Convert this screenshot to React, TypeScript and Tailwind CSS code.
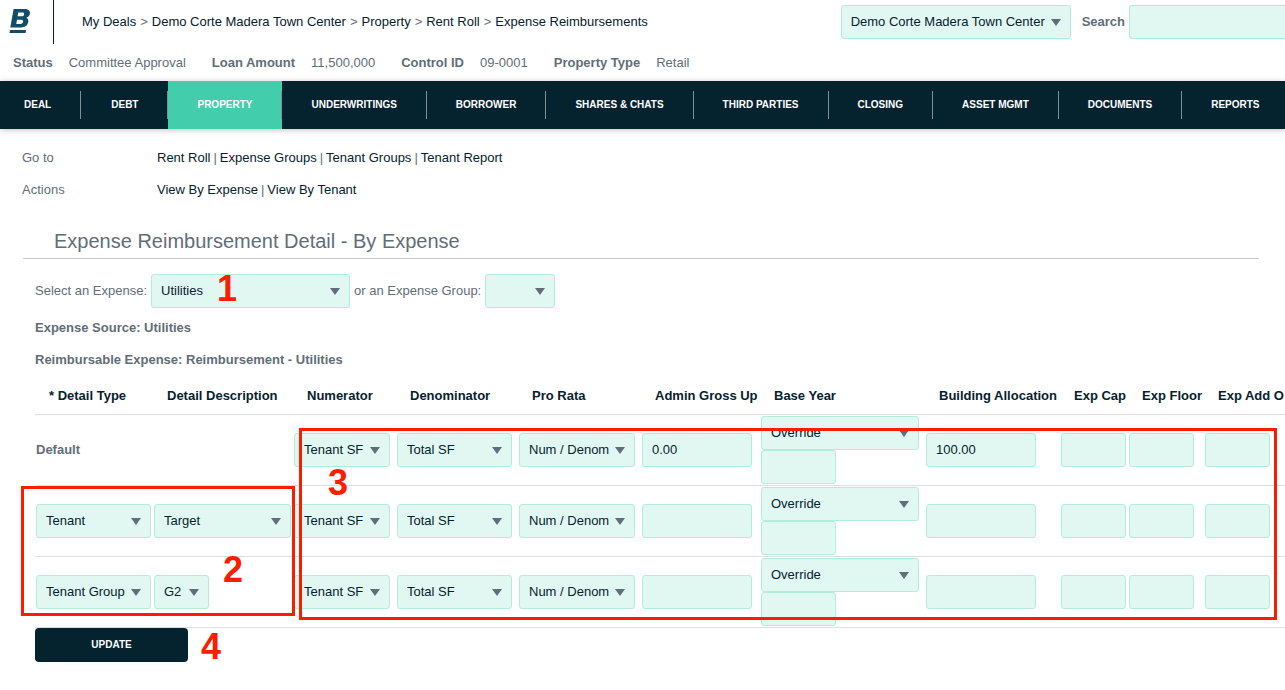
import { Fragment } from 'react';

type SelectProps = {
  label: string;
  value: string;
  className: string;
};

type InputProps = {
  label: string;
  value?: string;
  className: string;
};

type Row = {
  type: string;
  description?: string;
  descriptionWidth?: string;
  adminGrossUp?: string;
  allocation?: string;
};

const breadcrumbs = ['My Deals', 'Demo Corte Madera Town Center', 'Property', 'Rent Roll', 'Expense Reimbursements'];

const summary = [
  { label: 'Status', value: 'Committee Approval' },
  { label: 'Loan Amount', value: '11,500,000' },
  { label: 'Control ID', value: '09-0001' },
  { label: 'Property Type', value: 'Retail' },
];

const navItems = [
  { label: 'DEAL', padding: 'pl-6 pr-[29px]' },
  { label: 'DEBT', padding: 'pl-[30px] pr-[29px]' },
  { label: 'PROPERTY', padding: 'px-[29px]' },
  { label: 'UNDERWRITINGS', padding: 'px-[29px]' },
  { label: 'BORROWER', padding: 'px-[29px]' },
  { label: 'SHARES & CHATS', padding: 'px-[29px]' },
  { label: 'THIRD PARTIES', padding: 'px-[29px]' },
  { label: 'CLOSING', padding: 'px-[29px]' },
  { label: 'ASSET MGMT', padding: 'px-[29px]' },
  { label: 'DOCUMENTS', padding: 'px-[29px]' },
  { label: 'REPORTS', padding: 'px-[29px]' },
];

const links = [
  { label: 'Go to', items: ['Rent Roll', 'Expense Groups', 'Tenant Groups', 'Tenant Report'] },
  { label: 'Actions', items: ['View By Expense', 'View By Tenant'] },
];

const columns = [
  { label: '* Detail Type', width: 'w-[118px]' },
  { label: 'Detail Description', width: 'w-[140px]' },
  { label: 'Numerator', width: 'w-[103px]' },
  { label: 'Denominator', width: 'w-[122px]' },
  { label: 'Pro Rata', width: 'w-[123px]' },
  { label: 'Admin Gross Up', width: 'w-[119px]' },
  { label: 'Base Year', width: 'w-[165px]' },
  { label: 'Building Allocation', width: 'w-[135px]' },
  { label: 'Exp Cap', width: 'w-[68px]' },
  { label: 'Exp Floor', width: 'w-[76px]' },
  { label: 'Exp Add O', width: 'w-[100px]' },
];

const rows: Row[] = [
  { type: 'Default', adminGrossUp: '0.00', allocation: '100.00' },
  { type: 'Tenant', description: 'Target', descriptionWidth: 'w-[137px]' },
  { type: 'Tenant Group', description: 'G2', descriptionWidth: 'w-[55px]' },
];

function Select({ label, value, className }: SelectProps) {
  return (
    <div className={`relative ${className}`}>
      <select
        aria-label={label}
        defaultValue={value}
        className="block h-[34px] w-full appearance-none rounded-[3px] border border-[#b3ecdd] bg-[#e1f8f2] pl-[9px] text-[#05222f] outline-none"
      >
        <option value={value}>{value}</option>
      </select>
      <svg
        viewBox="0 0 10 7"
        className="pointer-events-none absolute right-[10px] top-[14px] h-[7px] w-[10px]"
        aria-hidden="true"
      >
        <path d="M0 0h10L5 7z" fill="#5f6e78" />
      </svg>
    </div>
  );
}

function Input({ label, value = '', className }: InputProps) {
  return (
    <input
      type="text"
      aria-label={label}
      defaultValue={value}
      className={`block h-[34px] rounded-[3px] border border-[#b3ecdd] bg-[#e1f8f2] px-[9px] text-[#05222f] outline-none ${className}`}
    />
  );
}

function Logo() {
  return (
    <svg viewBox="0 0 22 26" className="h-[26px] w-[22px]" fill="#124c66" role="img" aria-label="Home">
      <path
        fillRule="evenodd"
        d="M4.6 1H15.5C19 1 21.4 2.6 20.9 5.6C20.6 7.8 19.4 9.2 17.3 9.8C19.1 10.5 19.6 11.8 19.2 14.1C18.6 17.6 16.3 19.5 12 19.5H1.3zM9.2 4.6L8.6 8.3H12.4C14 8.3 14.9 7.7 15.1 6.4C15.3 5.1 14.7 4.6 13.2 4.6zM8 11.7L7.3 15.9H11.3C13 15.9 13.9 15.2 14.1 13.8C14.3 12.4 13.6 11.7 12.1 11.7z"
      />
      <path d="M1 22h16l-.4 3H.5z" />
    </svg>
  );
}

function Header() {
  return (
    <header>
      <div className="flex items-start justify-between">
        <div className="flex">
          <div className="flex h-11 w-[54px] border-r border-[#05222f] pl-[9px] pt-2">
            <Logo />
          </div>
          <nav className="flex gap-1 whitespace-nowrap pl-7 pt-[14px] leading-4" aria-label="Breadcrumb">
            {breadcrumbs.map((item, index) => (
              <Fragment key={item}>
                {index > 0 && <span>&gt;</span>}
                <a href="#" className="text-[#05222f]">
                  {item}
                </a>
              </Fragment>
            ))}
          </nav>
        </div>
        <div className="flex shrink-0 items-center pt-[5px]">
          <Select label="Deal" value="Demo Corte Madera Town Center" className="w-[230px]" />
          <label htmlFor="search" className="pl-[11px] pr-1 font-bold">
            Search
          </label>
          <input
            id="search"
            type="text"
            className="block h-[34px] w-[156px] rounded-l-[3px] border border-r-0 border-[#b3ecdd] bg-[#e1f8f2] px-[9px] outline-none"
          />
        </div>
      </div>
      <dl className="flex gap-[26px] whitespace-nowrap pb-[10px] pl-[13px] pt-[11px] leading-4">
        {summary.map((item) => (
          <div key={item.label} className="flex gap-4">
            <dt className="font-bold">{item.label}</dt>
            <dd>{item.value}</dd>
          </div>
        ))}
      </dl>
    </header>
  );
}

function MainNav() {
  return (
    <nav className="h-12 bg-[#05222f] shadow-[0_1px_6px_rgba(0,0,0,0.25)]">
      <ul className="flex h-full overflow-hidden whitespace-nowrap text-[10px] font-bold text-white">
        {navItems.map((item) => (
          <li
            key={item.label}
            className={`flex shrink-0 items-center ${item.label === 'PROPERTY' ? 'bg-[#42cdad]' : ''}`}
          >
            <a href="#" className={`pb-[2px] ${item.padding}`}>
              {item.label}
            </a>
            <span className="h-7 w-px bg-[#828f96]" />
          </li>
        ))}
      </ul>
    </nav>
  );
}

function ExpenseTable() {
  return (
    <table className="w-[1269px] table-fixed border-collapse text-left text-[#05222f]">
      <colgroup>
        {columns.map((column) => (
          <col key={column.label} className={column.width} />
        ))}
      </colgroup>
      <thead>
        <tr className="h-9 border-b border-[#dddfe0]">
          {columns.map((column) => (
            <th key={column.label} scope="col" className="whitespace-nowrap p-0 pl-[14px] font-bold">
              {column.label}
            </th>
          ))}
        </tr>
      </thead>
      <tbody>
        {rows.map((row) => (
          <tr key={row.type} className="border-b border-[#dddfe0]">
            <td className="p-px">
              {row.description ? (
                <Select label="Detail Type" value={row.type} className="w-[115px]" />
              ) : (
                <span className="font-bold text-[#5f6e78]">{row.type}</span>
              )}
            </td>
            <td className="p-px">
              {row.description && (
                <Select label="Detail Description" value={row.description} className={row.descriptionWidth ?? ''} />
              )}
            </td>
            <td className="p-px">
              <Select label="Numerator" value="Tenant SF" className="w-24" />
            </td>
            <td className="p-px">
              <Select label="Denominator" value="Total SF" className="w-[115px]" />
            </td>
            <td className="p-px">
              <Select label="Pro Rata" value="Num / Denom" className="w-[116px]" />
            </td>
            <td className="p-px">
              <Input label="Admin Gross Up" value={row.adminGrossUp} className="w-[110px]" />
            </td>
            <td className="p-px">
              <Select label="Base Year" value="Override" className="w-[158px]" />
              <Input label="Base Year Amount" className="w-[75px]" />
            </td>
            <td className="p-px">
              <Input label="Building Allocation" value={row.allocation} className="w-[110px]" />
            </td>
            <td className="p-px">
              <Input label="Exp Cap" className="w-[65px]" />
            </td>
            <td className="p-px">
              <Input label="Exp Floor" className="w-[65px]" />
            </td>
            <td className="p-px">
              <Input label="Exp Add O" className="w-[65px]" />
            </td>
          </tr>
        ))}
      </tbody>
    </table>
  );
}

// Red callouts that mark the four steps on top of the form
function Callouts() {
  return (
    <div className="pointer-events-none absolute left-0 top-0 text-[36px] font-bold leading-9 text-[#fa1e00]">
      <div className="absolute left-[21px] top-[486px] h-[130px] w-[274px] border-[3px] border-[#fa1e00]" />
      <div className="absolute left-[299px] top-[428px] h-[192px] w-[978px] border-[3px] border-[#fa1e00]" />
      <span className="absolute left-[217px] top-[271px]">1</span>
      <span className="absolute left-[223px] top-[552px]">2</span>
      <span className="absolute left-[328px] top-[465px]">3</span>
      <span className="absolute left-[201px] top-[629px]">4</span>
    </div>
  );
}

function App() {
  return (
    <div className="relative min-h-screen overflow-hidden bg-white font-['Liberation_Sans',Arial,sans-serif] text-[13px] text-[#5f6e78]">
      <Header />
      <MainNav />
      <main className="pt-[21px]">
        <dl className="pl-[22px] leading-4">
          {links.map((group) => (
            <div key={group.label} className="mb-4 flex">
              <dt className="w-[135px]">{group.label}</dt>
              <dd className="flex gap-[3px]">
                {group.items.map((item, index) => (
                  <Fragment key={item}>
                    {index > 0 && <span>|</span>}
                    <a href="#" className="text-[#05222f]">
                      {item}
                    </a>
                  </Fragment>
                ))}
              </dd>
            </div>
          ))}
        </dl>
        <h1 className="ml-[23px] mr-[26px] mt-[31px] border-b border-[#c4c8cb] pb-[5px] pl-[31px] text-[20px] leading-6">
          Expense Reimbursement Detail - By Expense
        </h1>
        <div className="flex items-center gap-1 pl-[35px] pt-[15px]">
          <span>Select an Expense:</span>
          <Select label="Select an Expense" value="Utilities" className="w-[199px]" />
          <span>or an Expense Group:</span>
          <Select label="Expense Group" value="" className="w-[70px]" />
        </div>
        <div className="pl-[35px]">
          <p className="mt-3 font-bold leading-4">Expense Source: Utilities</p>
          <p className="mb-[10px] mt-4 font-bold leading-4">Reimbursable Expense: Reimbursement - Utilities</p>
          <ExpenseTable />
          <button
            type="button"
            className="h-[34px] w-[153px] rounded-[4px] bg-[#05222f] text-[10px] font-bold text-white"
          >
            UPDATE
          </button>
        </div>
      </main>
      <Callouts />
    </div>
  );
}

export default App;
